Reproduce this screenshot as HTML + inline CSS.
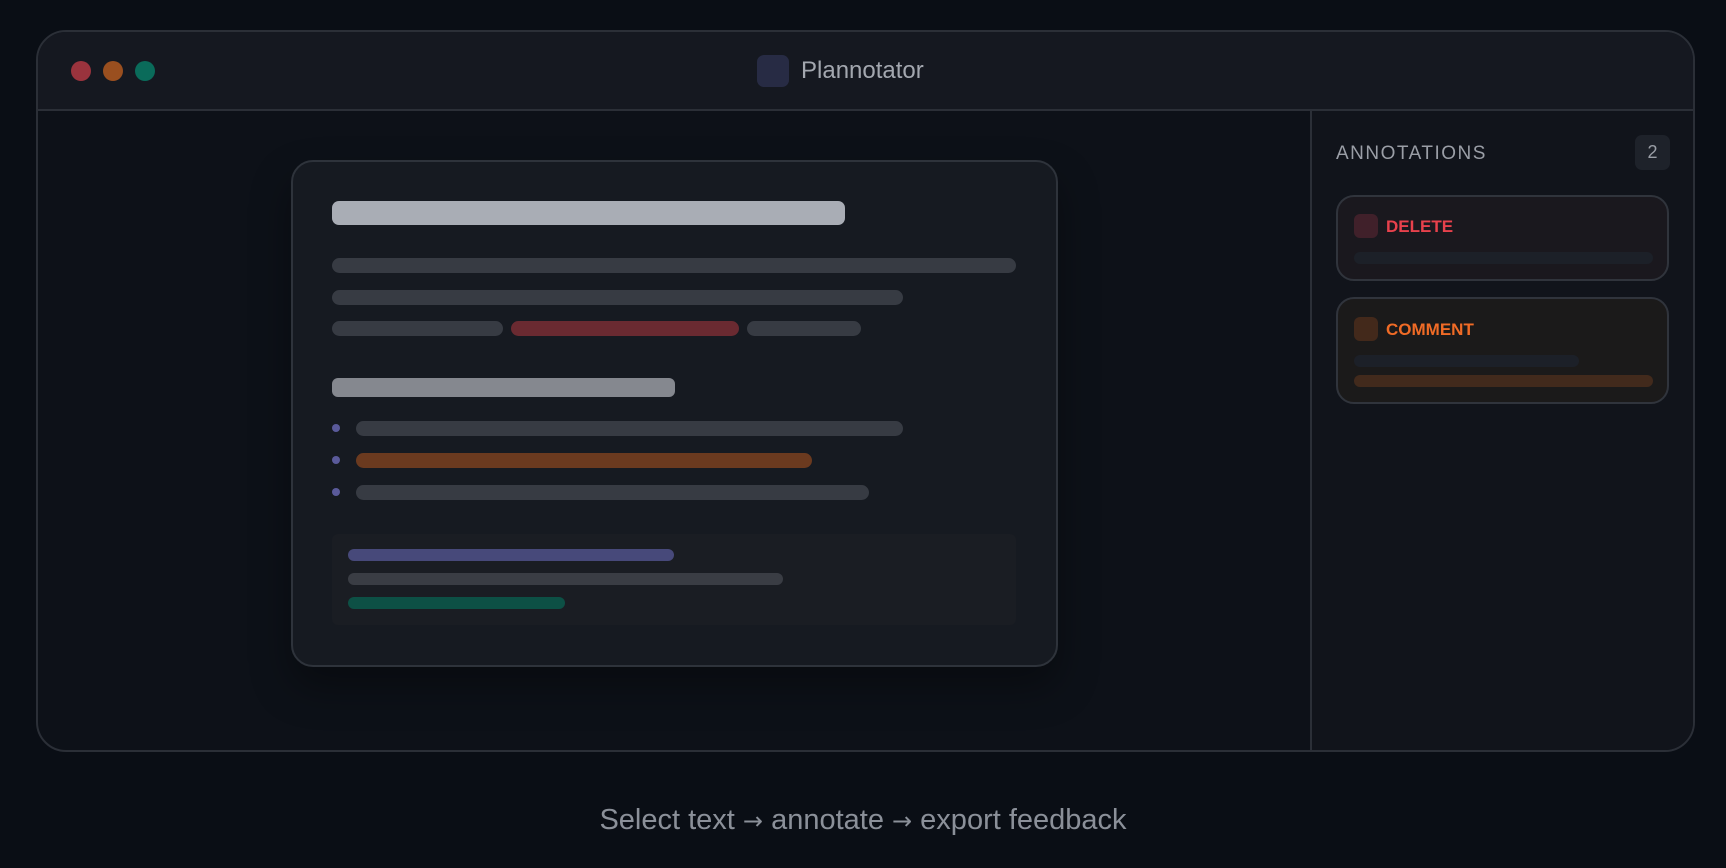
<!DOCTYPE html>
<html><head><meta charset="utf-8"><style>
*{margin:0;padding:0;box-sizing:border-box}
body{width:1726px;height:868px;background:#0a0e15;position:relative;overflow:hidden;font-family:"Liberation Sans",sans-serif}
.a{position:absolute}
.win{left:36px;top:30px;width:1659px;height:722px;border:2px solid #2b2f37;border-radius:30px;background:#0d1118;overflow:hidden}
.tb{left:0;top:0;width:100%;height:79px;background:#151820;border-bottom:2px solid #2b2f37}
.dot{width:20px;height:20px;border-radius:50%;top:29px}
.side{left:1272px;top:79px;width:400px;height:700px;background:#11141b;border-left:2px solid #2b2f37}
.bar{position:absolute;border-radius:8px}
.card{position:absolute;left:1336px;width:333px;border:2px solid #30343c;border-radius:18px}
.ar{font-family:"DejaVu Sans",sans-serif;font-size:24px}
</style></head><body>
<div class="a win">
 <div class="a tb">
  <div class="a dot" style="left:33px;background:#9a333d"></div>
  <div class="a dot" style="left:65px;background:#9a4f1f"></div>
  <div class="a dot" style="left:97px;background:#0a6b5a"></div>
  <div class="a" style="left:719px;top:23px;width:32px;height:32px;border-radius:7px;background:#272b44"></div>
  <div class="a" style="left:763px;top:25px;font-size:24px;color:#a3a7af">Plannotator</div>
 </div>
 <div class="a side"></div>
</div>
<div class="a" style="left:1336px;top:143px;font-size:19px;letter-spacing:1.5px;color:#9a9ea6">ANNOTATIONS</div>
<div class="a" style="left:1635px;top:135px;width:35px;height:35px;border-radius:7px;background:#1e222a;color:#9a9ea6;font-size:18px;text-align:center;line-height:35px">2</div>
<div class="card" style="top:195px;height:86px;background:#1a181e">
 <div class="a" style="left:16px;top:17px;width:24px;height:24px;border-radius:6px;background:#40202a"></div>
 <div class="a" style="left:48px;top:20px;font-size:17px;font-weight:bold;color:#e8414c">DELETE</div>
 <div class="bar" style="left:16px;top:55px;width:299px;height:12px;background:#1c2028"></div>
</div>
<div class="card" style="top:297px;height:107px;background:#1b1a1a">
 <div class="a" style="left:16px;top:18px;width:24px;height:24px;border-radius:6px;background:#43291b"></div>
 <div class="a" style="left:48px;top:21px;font-size:17px;font-weight:bold;color:#f06b26"><span>COMMENT</span></div>
 <div class="bar" style="left:16px;top:56px;width:225px;height:12px;background:#1c2028"></div>
 <div class="bar" style="left:16px;top:76px;width:299px;height:12px;background:#422a1c"></div>
</div>
<div class="a" style="left:291px;top:160px;width:767px;height:507px;background:#161a21;border:2px solid #2e333b;border-radius:22px;box-shadow:0 20px 40px rgba(0,0,0,.35)"></div>
<div class="bar" style="left:332px;top:201px;width:513px;height:24px;background:#a9adb5;border-radius:7px"></div>
<div class="bar" style="left:332px;top:258px;width:684px;height:15px;background:#373b43"></div>
<div class="bar" style="left:332px;top:290px;width:571px;height:15px;background:#373b43"></div>
<div class="bar" style="left:332px;top:321px;width:171px;height:15px;background:#373b43"></div>
<div class="bar" style="left:511px;top:321px;width:228px;height:15px;background:#6a2a31"></div>
<div class="bar" style="left:747px;top:321px;width:114px;height:15px;background:#373b43"></div>
<div class="bar" style="left:332px;top:378px;width:343px;height:19px;background:#85888f;border-radius:6px"></div>
<div class="bar" style="left:332px;top:424px;width:8px;height:8px;background:#5a5a9a;border-radius:50%"></div>
<div class="bar" style="left:332px;top:456px;width:8px;height:8px;background:#5a5a9a;border-radius:50%"></div>
<div class="bar" style="left:332px;top:488px;width:8px;height:8px;background:#5a5a9a;border-radius:50%"></div>
<div class="bar" style="left:356px;top:421px;width:547px;height:15px;background:#373b43"></div>
<div class="bar" style="left:356px;top:453px;width:456px;height:15px;background:#6b3a1f"></div>
<div class="bar" style="left:356px;top:485px;width:513px;height:15px;background:#373b43"></div>
<div class="bar" style="left:332px;top:534px;width:684px;height:91px;background:#1a1d23;border-radius:6px"></div>
<div class="bar" style="left:348px;top:549px;width:326px;height:12px;background:#47497a"></div>
<div class="bar" style="left:348px;top:573px;width:435px;height:12px;background:#3a3d44"></div>
<div class="bar" style="left:348px;top:597px;width:217px;height:12px;background:#0d5045"></div>
<div class="a" style="left:0;width:1726px;top:804px;text-align:center;font-size:29px;color:#8b9099">Select text <span class="ar">→</span> annotate <span class="ar">→</span> export feedback</div>
</body></html>
